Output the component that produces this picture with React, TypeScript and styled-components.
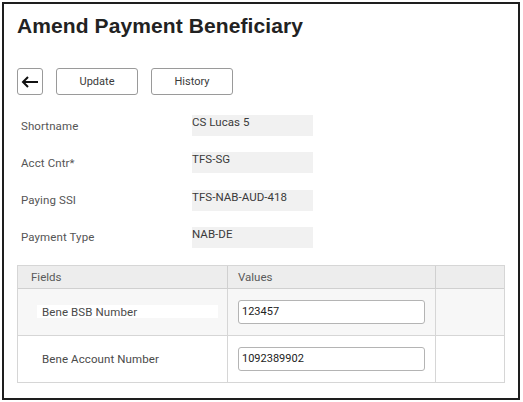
import React from "react";
import styled, { createGlobalStyle } from "styled-components";

const Global = createGlobalStyle`
  html, body { margin: 0; padding: 0; background: #ffffff; }
  body { font-family: Roboto, "Liberation Sans", Arial, sans-serif; }
  * { box-sizing: border-box; }
`;

const Frame = styled.div`
  margin: 2px;
  width: 518px;
  height: 398px;
  border: 2px solid #1e1e1e;
  padding: 10px 13px 0 13px;
  display: flex;
  flex-direction: column;
`;

const Title = styled.h1`
  margin: 0;
  font-family: "Liberation Sans", Arial, sans-serif;
  font-weight: 700;
  font-size: 21px;
  line-height: 24px;
  color: #222222;
  letter-spacing: 0.1px;
`;

const Toolbar = styled.div`
  margin-top: 30px;
  display: flex;
  gap: 13px;
  align-items: center;
`;

const Button = styled.button<{ $w: number }>`
  width: ${(p) => p.$w}px;
  height: 27px;
  padding: 0;
  border: 1px solid #9a9a9a;
  border-radius: 3px;
  background: #ffffff;
  font-family: Roboto, "Liberation Sans", Arial, sans-serif;
  font-size: 11px;
  color: #3a3a3a;
  display: flex;
  align-items: center;
  justify-content: center;
`;

const Form = styled.div`
  margin-top: 20px;
  display: grid;
  grid-template-columns: 171px 121px;
  grid-auto-rows: 21px;
  row-gap: 16.33px;
  padding-left: 4px;
`;

const Label = styled.div`
  font-size: 11.5px;
  color: #555555;
  display: flex;
  align-items: center;
  letter-spacing: 0.1px;
`;

const ValueBox = styled.div`
  background: #f1f1f1;
  font-size: 11.5px;
  line-height: 14px;
  color: #3a3a3a;
  letter-spacing: 0.05px;
`;

const Table = styled.div`
  margin-top: 17px;
  width: 488px;
  border: 1px solid #d6d6d6;
  display: grid;
  grid-template-columns: 210px 208px 68px;
`;

const HeadCell = styled.div<{ $pl: number; $last?: boolean }>`
  height: 23px;
  background: #ededed;
  border-bottom: 1px solid #d0d0d0;
  border-right: ${(p) => (p.$last ? "none" : "1px solid #d0d0d0")};
  padding-left: ${(p) => p.$pl}px;
  font-size: 11.5px;
  color: #5a5a5a;
  display: flex;
  align-items: center;
`;

const Cell = styled.div<{ $bg: string; $last?: boolean; $bottom?: boolean }>`
  height: ${(p) => (p.$bottom ? 46 : 47)}px;
  background: ${(p) => p.$bg};
  border-right: ${(p) => (p.$last ? "none" : "1px solid #d6d6d6")};
  border-bottom: ${(p) => (p.$bottom ? "none" : "1px solid #d6d6d6")};
  display: flex;
  align-items: center;
`;

const FieldLabel = styled.div`
  margin-left: 19px;
  width: 181px;
  padding-left: 5px;
  height: 13px;
  background: #ffffff;
  font-size: 11.5px;
  color: #4a4a4a;
  display: flex;
  align-items: center;
  letter-spacing: 0.1px;
`;

const Input = styled.input`
  margin-left: 10px;
  width: 187px;
  height: 24px;
  border: 1px solid #b4b4b4;
  border-radius: 3px;
  background: #ffffff;
  padding: 0 0 0 3px;
  font-family: Roboto, "Liberation Sans", Arial, sans-serif;
  font-size: 11px;
  color: #222222;
  outline: none;
`;

const BackArrow = () => (
  <svg width="18" height="12" viewBox="0 0 18 12">
    <path d="M17 6 H2.5" stroke="#111" strokeWidth="2" fill="none" />
    <path d="M7 1 L2 6 L7 11" stroke="#111" strokeWidth="2" fill="none" strokeLinejoin="miter" />
  </svg>
);

const fields = [
  ["Shortname", "CS Lucas 5"],
  ["Acct Cntr*", "TFS-SG"],
  ["Paying SSI", "TFS-NAB-AUD-418"],
  ["Payment Type", "NAB-DE"],
];

const rows = [
  { label: "Bene BSB Number", value: "123457", bg: "#f7f7f7" },
  { label: "Bene Account Number", value: "1092389902", bg: "#ffffff" },
];

export default function App() {
  return (
    <>
      <Global />
      <Frame>
        <Title>Amend Payment Beneficiary</Title>
        <Toolbar>
          <Button $w={26}>
            <BackArrow />
          </Button>
          <Button $w={82}>Update</Button>
          <Button $w={82}>History</Button>
        </Toolbar>
        <Form>
          {fields.map(([l, v]) => (
            <React.Fragment key={l}>
              <Label>{l}</Label>
              <ValueBox>{v}</ValueBox>
            </React.Fragment>
          ))}
        </Form>
        <Table>
          <HeadCell $pl={13}>Fields</HeadCell>
          <HeadCell $pl={10}>Values</HeadCell>
          <HeadCell $pl={0} $last />
          {rows.map((r, i) => (
            <React.Fragment key={r.label}>
              <Cell $bg={r.bg} $bottom={i === rows.length - 1}>
                <FieldLabel>{r.label}</FieldLabel>
              </Cell>
              <Cell $bg={r.bg} $bottom={i === rows.length - 1}>
                <Input defaultValue={r.value} />
              </Cell>
              <Cell $bg={r.bg} $last $bottom={i === rows.length - 1} />
            </React.Fragment>
          ))}
        </Table>
      </Frame>
    </>
  );
}
